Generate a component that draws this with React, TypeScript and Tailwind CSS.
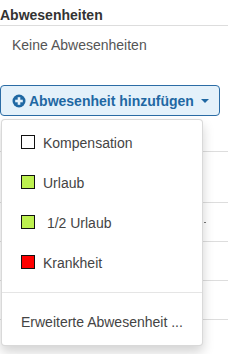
import React from "react";

function PlusCircle() {
  return (
    <svg width="14" height="14" viewBox="0 0 14 14" className="shrink-0">
      <circle cx="7" cy="7" r="6.5" fill="#1f68a3" />
      <rect x="3.2" y="5.7" width="7.6" height="2.6" fill="#e4f1fa" />
      <rect x="5.7" y="3.2" width="2.6" height="7.6" fill="#e4f1fa" />
    </svg>
  );
}

function Item({ color, label }: { color: string; label: string }) {
  return (
    <div className="flex h-[40px] items-center pl-[19px]">
      <span
        className="mr-[8px] h-[14px] w-[14px] shrink-0 border border-[#111]"
        style={{ backgroundColor: color }}
      />
      <span className="whitespace-pre pt-[2px] leading-[20px] text-[#444]">{label}</span>
    </div>
  );
}

export default function App() {
  return (
    <div className="relative h-[354px] w-[228px] overflow-hidden bg-white font-['Liberation_Sans',Arial,sans-serif] text-[14px]">
      <div className="border-b border-[#ddd] pt-[5px] font-bold leading-[20px] text-[#333]">
        Abwesenheiten
      </div>
      <div className="mt-[9px] pl-3 leading-[20px] text-[#555]">Keine Abwesenheiten</div>

      <div className="relative mt-[30px]">
        <button className="flex h-[31px] w-[220px] items-center rounded-[4px] border border-[#2b6ca5] bg-[#e4f1fa] pl-[11px] font-bold text-[#1f68a3]">
          <PlusCircle />
          <span className="ml-[3px] leading-[20px]">Abwesenheit hinzufügen</span>
          <span className="ml-[7px] h-0 w-0 border-x-[4px] border-t-[4px] border-x-transparent border-t-[#1f68a3]" />
        </button>

        <div className="absolute left-[1px] top-[34px] z-10 w-[202px] rounded-[4px] border border-[rgba(0,0,0,0.15)] bg-white pt-[2px] shadow-[0_6px_12px_rgba(0,0,0,0.175)]">
          <Item color="#ffffff" label="Kompensation" />
          <Item color="#bdf04f" label="Urlaub" />
          <Item color="#bdf04f" label=" 1/2 Urlaub" />
          <Item color="#ff0000" label="Krankheit" />
          <div className="mt-[10px] h-px bg-[#e5e5e5]" />
          <div className="pb-[13px] pl-[19px] pt-[19px] leading-[20px] text-[#444]">
            Erweiterte Abwesenheit ...
          </div>
        </div>
      </div>

      <div className="mt-[35px]">
        <div className="h-[51px] border-t border-[#ddd]" />
        <div className="flex h-[39px] items-center justify-end border-t border-[#ddd] pr-[22px]">
          <span className="h-px w-[2px] bg-[#777]" />
        </div>
        <div className="h-[39px] border-t border-[#ddd]" />
        <div className="h-[39px] border-t border-[#ddd]" />
        <div className="h-[39px] border-t border-[#ddd]" />
      </div>
    </div>
  );
}
